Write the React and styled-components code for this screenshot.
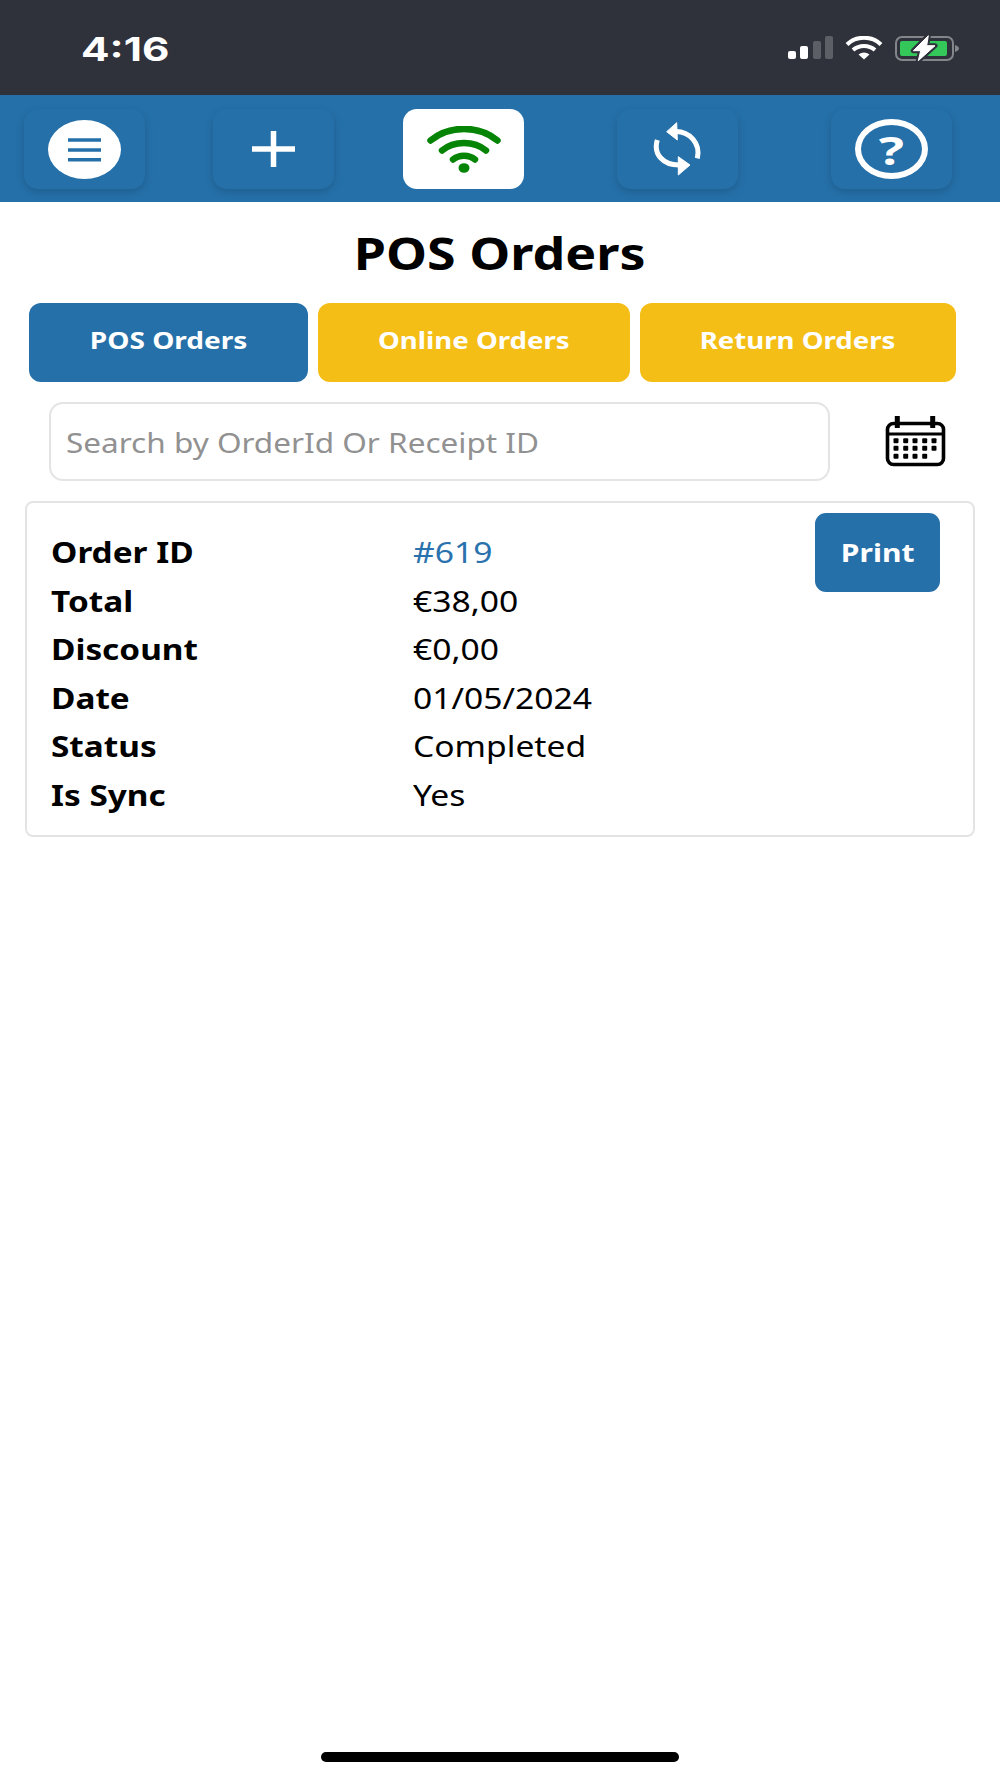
import React from "react";
import styled, { createGlobalStyle } from "styled-components";

const Global = createGlobalStyle`
  html, body { margin: 0; padding: 0; background: #fff; }
  * { box-sizing: border-box; }
`;
const BLUE = "#2570a9";
const Page = styled.div`
  width: 1000px; height: 1778px; display: flex; flex-direction: column;
  font-family: "Noto Sans", sans-serif; color: #000; overflow: hidden; background: #fff;
`;
const Wide = styled.span`
  display: inline-block; white-space: nowrap;
  transform: scaleX(${p => p.$x || 1.2});
  transform-origin: ${p => p.$origin || "center"};
`;
const StatusBar = styled.div`
  height: 95px; background: #2f313b; display: flex; align-items: center; padding: 0 41px 0 81px; flex: none;
`;
const Time = styled.div`
  font-family: "Inter", sans-serif; font-weight: 700; font-size: 33px; line-height: 36px; color: #fff; width: 86px; margin-top: 2px;
`;
const StatusIcons = styled.div`
  margin-left: auto; display: flex; align-items: center; gap: 12px;
`;
const Toolbar = styled.div`
  height: 107px; background: ${BLUE}; display: flex; align-items: flex-start; padding: 14px 0 0 24px; flex: none;
`;
const ToolButton = styled.div`
  width: 121px; height: 80px; border-radius: 14px; margin-left: ${p => p.$ml || 0}px;
  background: ${p => (p.$active ? "#fff" : BLUE)};
  box-shadow: ${p => (p.$active ? "none" : "0 3px 9px rgba(0,0,0,.16)")};
  display: flex; align-items: center; justify-content: center;
`;
const Title = styled.h1`
  margin: 0; height: 101px; display: flex; align-items: center; justify-content: center;
  font-size: 44px; font-weight: 700; flex: none;
`;
const Tabs = styled.div`display: flex; gap: 10px; padding-left: 29px; flex: none;`;
const Tab = styled.div`
  width: ${p => p.$w}px; height: 79px; border-radius: 12px; display: flex; align-items: center; justify-content: center;
  padding-bottom: 6px; background: ${p => (p.$on ? BLUE : "#f4be16")}; color: #fff; font-weight: 700; font-size: 23px;
`;
const SearchRow = styled.div`display: flex; align-items: center; padding-left: 49px; margin-top: 20px; flex: none;`;
const Search = styled.div`
  width: 781px; height: 79px; border: 2px solid #e4e4e4; border-radius: 14px; display: flex; align-items: center;
  padding-left: 15px; color: #919191; font-size: 28px;
`;
const CalendarSlot = styled.div`margin-left: 55px; display: flex;`;
const Card = styled.div`
  margin: 20px 0 0 25px; width: 950px; height: 336px; border: 2px solid #e4e4e4; border-radius: 8px;
  display: flex; align-items: flex-start; padding: 10px 33px 0 24px; flex: none;
`;
const Details = styled.div`
  display: grid; grid-template-columns: 362px 1fr; grid-auto-rows: 48.6px; margin-top: 15px; flex: 1;
  font-size: 28.5px; line-height: 48.6px;
`;
const Label = styled.div`font-weight: 700;`;
const Value = styled.div`color: ${p => p.$link ? "#2a72ad" : "#000"};`;
const PrintButton = styled.div`
  width: 125px; height: 79px; border-radius: 11px; background: ${BLUE}; color: #fff; font-weight: 700; font-size: 25px;
  display: flex; align-items: center; justify-content: center; padding-bottom: 2px; flex: none;
`;
const HomeBar = styled.div`
  margin: auto 0 16px 321px; width: 358px; height: 10px; border-radius: 5px; background: #000; flex: none;
`;
const QuestionWrap = styled.div`
  width: 73px; height: 60px; border: 6px solid #fff; border-radius: 50%; color: #fff; font-weight: 700; font-size: 39px;
  display: flex; align-items: center; justify-content: center; line-height: 1;
`;

const Signal = () => (
  <svg width="45" height="24" viewBox="0 0 45 24">
    <rect x="0" y="15" width="8" height="8" rx="2" fill="#fff" />
    <rect x="12" y="10" width="8" height="13" rx="2" fill="#fff" />
    <rect x="25" y="5" width="8" height="18" rx="2" fill="#5d5f66" />
    <rect x="37" y="0" width="8" height="23" rx="2" fill="#5d5f66" />
  </svg>
);
const StatusWifi = () => (
  <svg width="38" height="24" viewBox="0 0 38 24" fill="none">
    <path d="M2 8.5C11-0.5 27-0.5 36 8.5" stroke="#fff" strokeWidth="4" />
    <path d="M8 14C14 8.5 24 8.5 30 14" stroke="#fff" strokeWidth="4" />
    <path d="M13.5 18.5L19 23.5L24.5 18.5C21 15.8 17 15.8 13.5 18.5Z" fill="#fff" />
  </svg>
);
const BOLT = "M33.3 1.7L18.3 16.7H25.7L23.3 26.7L40 11.7H31.7Z";
const Battery = () => (
  <svg width="64" height="28" viewBox="0 0 64 28" fill="none">
    <rect x="1" y="3" width="57" height="23" rx="6" stroke="#85868b" strokeWidth="2" />
    <rect x="5" y="7" width="47" height="15" rx="2" fill="#34c759" />
    <path d="M60 11C62.5 11.7 64 13 64 14.5C64 16 62.5 17.3 60 18Z" fill="#85868b" />
    <path d={BOLT} stroke="#2f313b" strokeWidth="5" strokeLinejoin="round" />
    <path d={BOLT} fill="#fff" stroke="#fff" strokeWidth="1" strokeLinejoin="round" />
  </svg>
);
const MenuIcon = () => (
  <svg width="73" height="59" viewBox="0 0 73 59">
    <ellipse cx="36.5" cy="29.5" rx="36.5" ry="29.5" fill="#fff" />
    <path d="M20 20H53M20 30H53M20 39.7H53" stroke={BLUE} strokeWidth="3.6" />
  </svg>
);
const PlusIcon = () => (
  <svg width="43" height="36" viewBox="0 0 43 36">
    <path d="M0 18H43M21.5 0V36" stroke="#fff" strokeWidth="5.5" />
  </svg>
);
const GreenWifi = () => (
  <svg width="74" height="47" viewBox="0 0 74 47" fill="none" stroke="#058405" strokeWidth="6.5" strokeLinecap="round">
    <path d="M3.5 14.5C22 -1 52 -1 70.5 14.5" />
    <path d="M15 24.5C27 14.5 47 14.5 59 24.5" />
    <path d="M26 33.5C32 28.5 42 28.5 48 33.5" />
    <ellipse cx="37" cy="42" rx="5.5" ry="4.8" fill="#058405" stroke="none" />
  </svg>
);
const SyncIcon = () => (
  <svg width="50" height="54" viewBox="0 0 50 54" fill="none">
    <path d="M23 9.5C36 9.5 48 21 44.3 36.3" stroke="#fff" strokeWidth="5" />
    <path d="M4.3 18C0 32 10 43 26 43" stroke="#fff" strokeWidth="5" />
    <path d="M13.7 9.7L23.7 0.7L24.3 18Z" fill="#fff" stroke="#fff" strokeWidth="1" strokeLinejoin="round" />
    <path d="M37 43L25.3 34.7L25.3 53Z" fill="#fff" stroke="#fff" strokeWidth="1" strokeLinejoin="round" />
  </svg>
);
const CalendarIcon = () => {
  const dots = [];
  [24.7, 32.3, 40.3].forEach((y, r) => {
    [11, 20.7, 30, 39.7, 49].forEach((x, c) => {
      if (r === 2 && c > 3) return;
      dots.push(<rect key={r + "-" + c} x={x - 2.5} y={y - 2.5} width="5" height="5" rx="1" fill="#000" />);
    });
  });
  return (
    <svg width="61" height="51" viewBox="0 0 61 51" fill="none">
      <rect x="2.5" y="7.5" width="56" height="41" rx="6" stroke="#000" strokeWidth="3.6" />
      <path d="M2.5 18H58.5" stroke="#000" strokeWidth="3" />
      <path d="M12.3 0V12M47.7 0V12" stroke="#000" strokeWidth="5" />
      {dots}
    </svg>
  );
};

const rows = [
  ["Order ID", "#619", true],
  ["Total", "€38,00"],
  ["Discount", "€0,00"],
  ["Date", "01/05/2024"],
  ["Status", "Completed"],
  ["Is Sync", "Yes"],
];

export default function App() {
  return (
    <Page>
      <Global />
      <StatusBar>
        <Time><Wide $x={1.28} $origin="left">4:16</Wide></Time>
        <StatusIcons><Signal /><StatusWifi /><Battery /></StatusIcons>
      </StatusBar>
      <Toolbar>
        <ToolButton><MenuIcon /></ToolButton>
        <ToolButton $ml={68}><PlusIcon /></ToolButton>
        <ToolButton $ml={69} $active><GreenWifi /></ToolButton>
        <ToolButton $ml={93}><SyncIcon /></ToolButton>
        <ToolButton $ml={93}><QuestionWrap><Wide $x={1.35}>?</Wide></QuestionWrap></ToolButton>
      </Toolbar>
      <Title><Wide $x={1.18}>POS Orders</Wide></Title>
      <Tabs>
        <Tab $w={279} $on><Wide $x={1.22}>POS Orders</Wide></Tab>
        <Tab $w={312}><Wide>Online Orders</Wide></Tab>
        <Tab $w={316}><Wide>Return Orders</Wide></Tab>
      </Tabs>
      <SearchRow>
        <Search><Wide $x={1.125} $origin="left">Search by OrderId Or Receipt ID</Wide></Search>
        <CalendarSlot><CalendarIcon /></CalendarSlot>
      </SearchRow>
      <Card>
        <Details>
          {rows.map(([l, v, link]) => (
            <React.Fragment key={l}>
              <Label><Wide $x={1.17} $origin="left">{l}</Wide></Label>
              <Value $link={link}><Wide $x={1.18} $origin="left">{v}</Wide></Value>
            </React.Fragment>
          ))}
        </Details>
        <PrintButton><Wide>Print</Wide></PrintButton>
      </Card>
      <HomeBar />
    </Page>
  );
}
